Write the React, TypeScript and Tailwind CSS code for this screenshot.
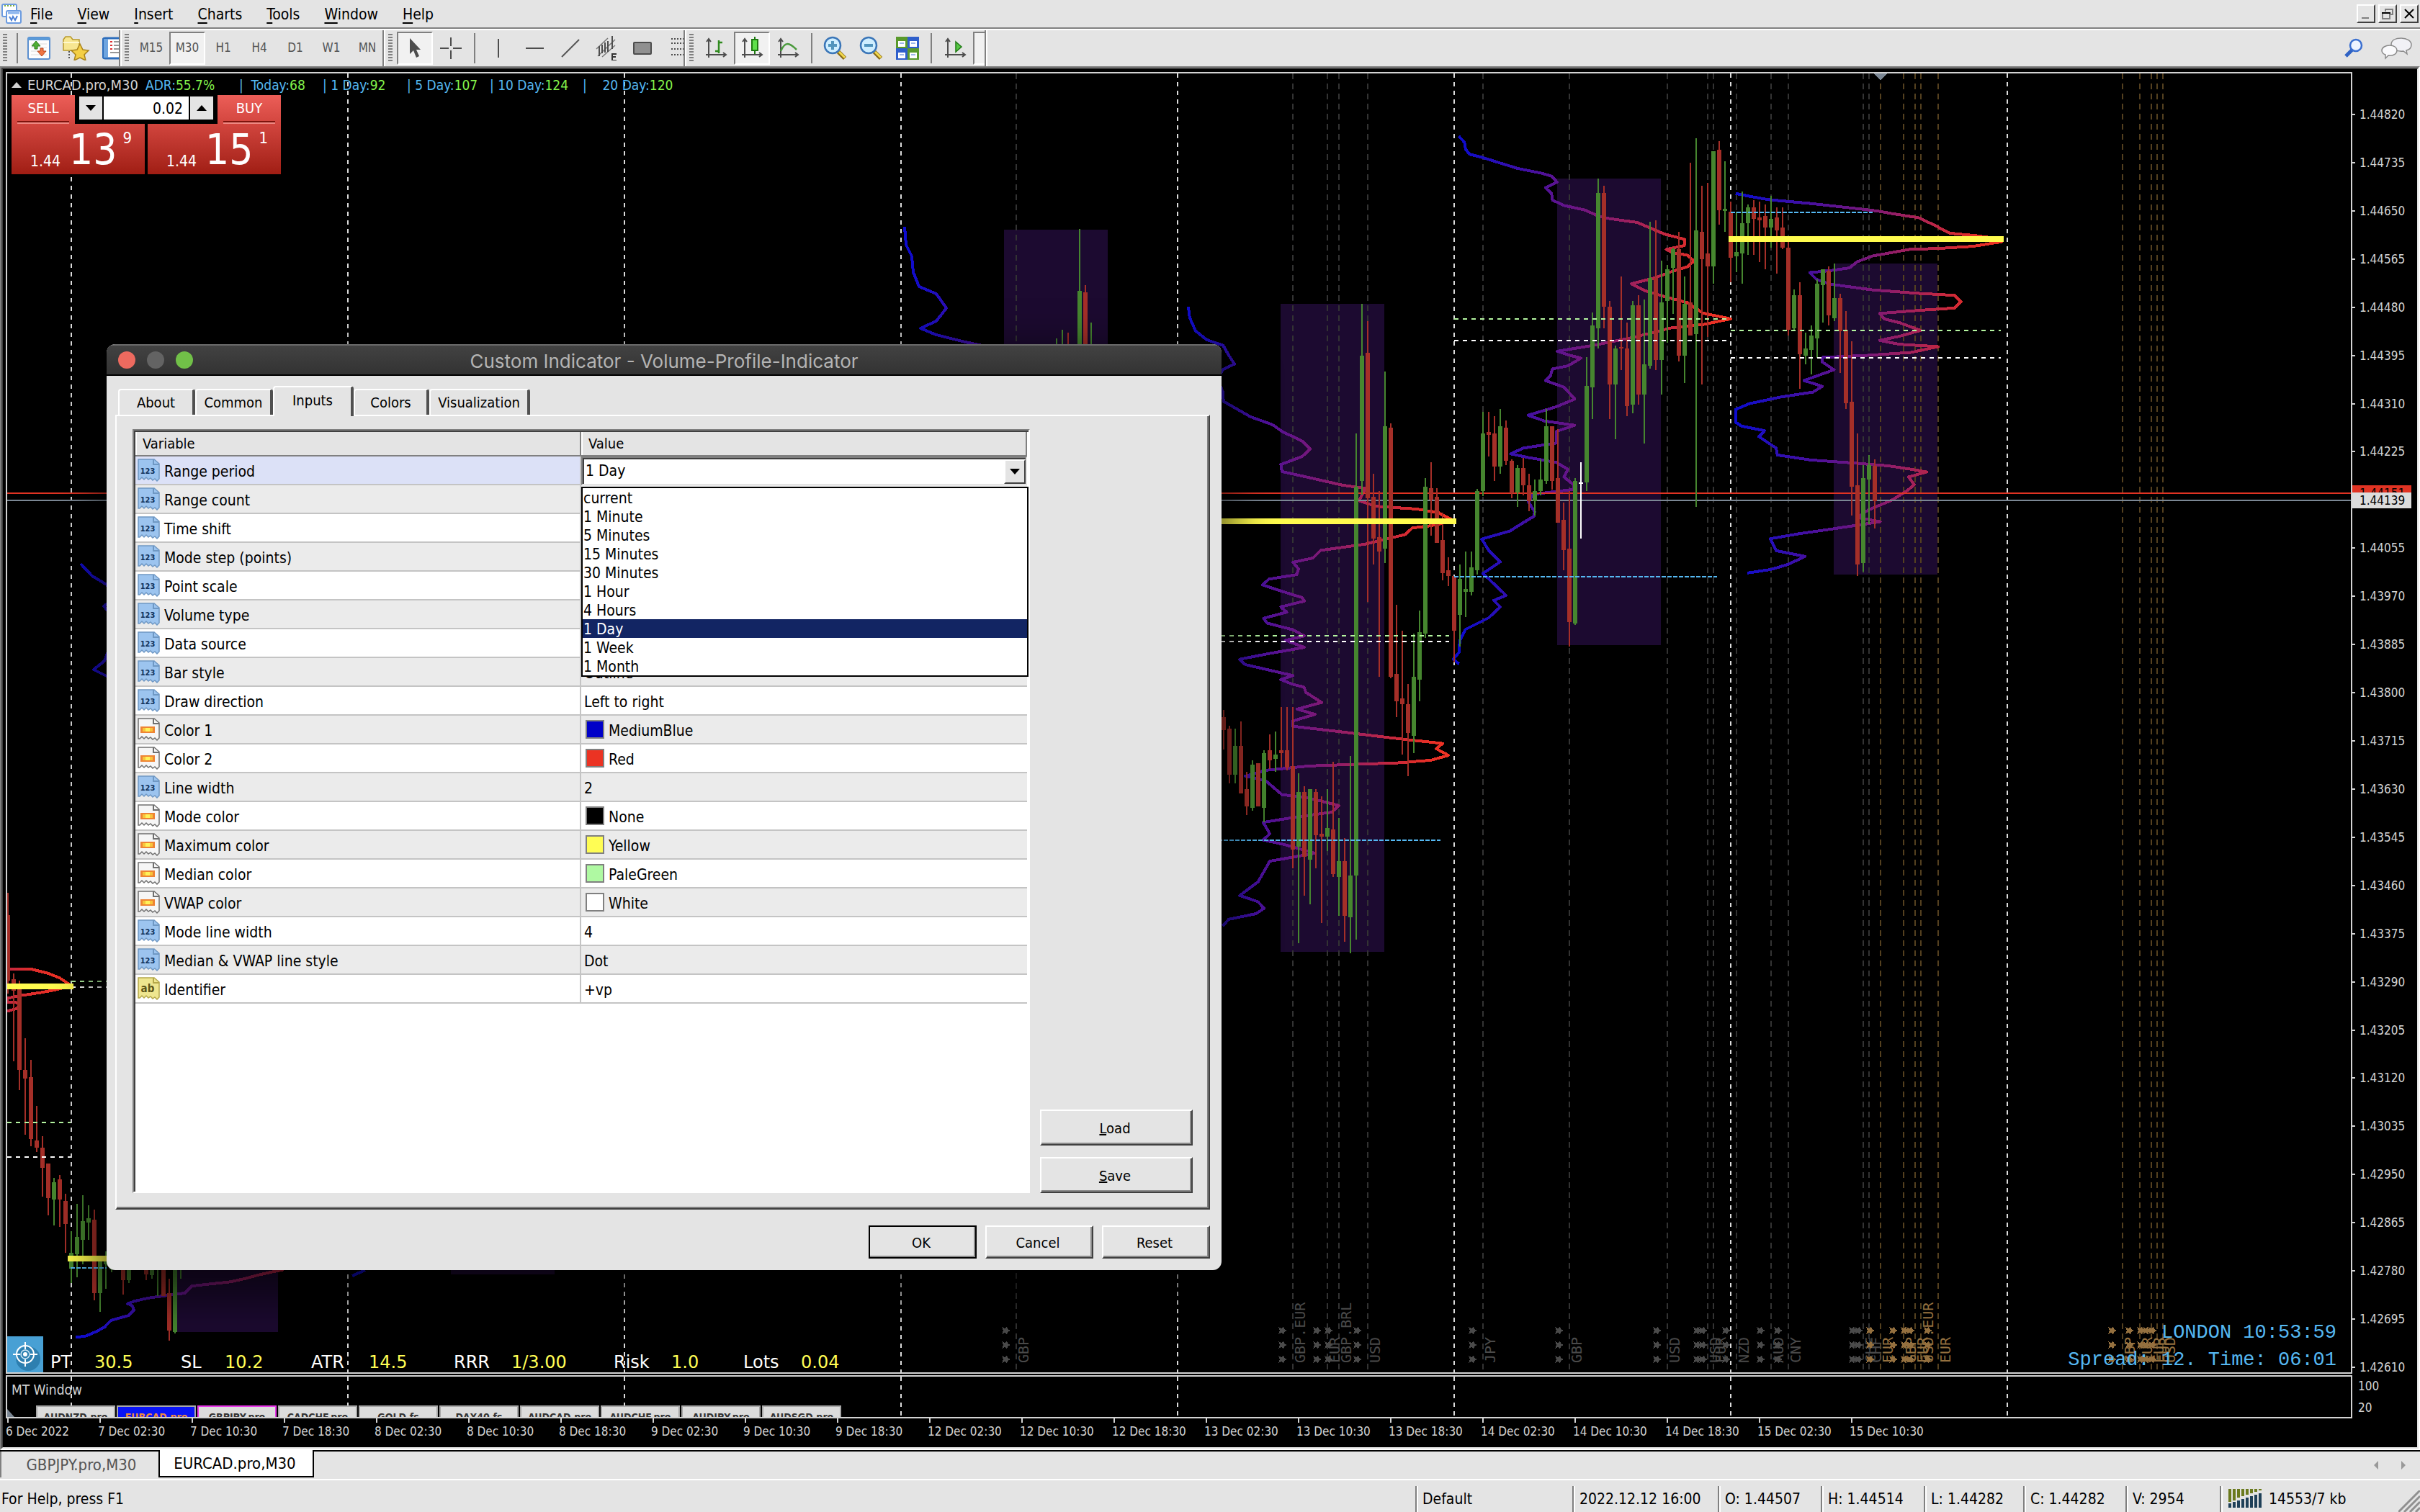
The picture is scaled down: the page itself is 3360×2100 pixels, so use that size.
import React, { useState } from "react";
import clsx from "clsx";

type Bar = [string, number, number, number, number];

type BarSeries = {
  x: number;
  y: number;
  scale: number;
  bars: Bar[];
};

const candleColors: Record<string, string> = {
  r: "#a52f28",
  g: "#46862f",
  w: "#ffffff",
};

// colour, high, open/close top, open/close bottom, low
const series: BarSeries[] = [
  {
    x: 11,
    y: 1200,
    scale: 2.24,
    bars: [
      ["r", 90, 160, 363, 403],
      ["r", 340, 358, 394, 613],
      ["r", 363, 385, 641, 703],
      ["r", 542, 641, 668, 842],
      ["r", 609, 663, 856, 878],
      ["r", 753, 860, 883, 896],
      ["r", 847, 883, 945, 1035],
      ["r", 932, 932, 1039, 1093],
      ["g", 977, 990, 1044, 1124],
      ["r", 968, 981, 1044, 1129],
      ["r", 1026, 1048, 1120, 1210],
      ["g", 1142, 1210, 1259, 1304],
      ["g", 1057, 1160, 1214, 1286],
      ["g", 1030, 1111, 1169, 1245],
      ["g", 1062, 1102, 1116, 1169],
      ["r", 1075, 1107, 1335, 1357],
      ["g", 1232, 1236, 1335, 1393],
      ["g", 1205, 1236, 1245, 1322],
      ["g", 1230, 1240, 1260, 1271],
      ["g", 1200, 1210, 1230, 1240],
      ["r", 1230, 1240, 1295, 1340],
      ["g", 1230, 1240, 1295, 1304],
      ["g", 1200, 1210, 1230, 1240],
      ["r", 1200, 1210, 1230, 1240],
      ["r", 1230, 1240, 1277, 1295],
      ["g", 1230, 1240, 1280, 1290],
      ["g", 1200, 1210, 1255, 1344],
      ["r", 1200, 1210, 1344, 1344],
      ["r", 1290, 1335, 1452, 1482],
      ["g", 1200, 1210, 1455, 1460],
      ["g", 1200, 1210, 1260, 1290],
    ],
  },
  {
    x: 1467,
    y: 0,
    scale: 1,
    bars: [
      ["g", 470, 500, 520, 540],
      ["g", 458, 500, 520, 540],
      ["r", 462, 500, 520, 540],
      ["g", 480, 500, 520, 540],
      ["g", 318, 404, 520, 540],
      ["r", 396, 406, 520, 540],
      ["g", 448, 500, 520, 540],
    ],
  },
  {
    x: 1699,
    y: 380,
    scale: 1.6333,
    bars: [
      ["r", 990, 1006, 1036, 1080],
      ["r", 1026, 1032, 1137, 1156],
      ["g", 1032, 1071, 1137, 1156],
      ["r", 1016, 1071, 1179, 1179],
      ["r", 1130, 1169, 1209, 1228],
      ["g", 1104, 1114, 1212, 1218],
      ["r", 1111, 1111, 1209, 1209],
      ["g", 1081, 1088, 1212, 1245],
      ["r", 1045, 1081, 1104, 1124],
      ["g", 1039, 1091, 1101, 1130],
      ["r", 983, 1081, 1088, 1120],
      ["r", 983, 1081, 1120, 1127],
      ["r", 983, 1117, 1307, 1349],
      ["g", 1134, 1176, 1300, 1519],
      ["r", 1163, 1176, 1323, 1411],
      ["g", 1169, 1169, 1330, 1431],
      ["r", 1169, 1176, 1274, 1349],
      ["r", 1186, 1271, 1277, 1473],
      ["g", 1169, 1258, 1277, 1310],
      ["r", 1107, 1261, 1362, 1369],
      ["g", 1235, 1333, 1369, 1457],
      ["r", 1281, 1333, 1457, 1515],
      ["g", 1094, 1365, 1460, 1542],
      ["g", 363, 483, 1365, 1511],
      ["g", 69, 186, 470, 502],
      ["r", 108, 180, 510, 745],
      ["r", 454, 506, 601, 660],
      ["r", 493, 598, 630, 915],
      ["g", 222, 346, 624, 657],
      ["r", 340, 350, 915, 918],
      ["r", 751, 908, 970, 1006],
      ["r", 810, 964, 977, 1091],
      ["r", 931, 977, 1042, 1140],
      ["g", 817, 915, 1049, 1088],
      ["g", 764, 813, 921, 970],
      ["g", 464, 483, 817, 826],
      ["r", 428, 487, 513, 595],
      ["r", 487, 506, 611, 611],
      ["r", 542, 604, 679, 696],
      ["r", 644, 673, 686, 709],
    ],
  },
  {
    x: 2019,
    y: 100,
    scale: 1.8667,
    bars: [
      ["r", 1307, 1307, 1449, 1530],
      ["g", 1277, 1314, 1407, 1490],
      ["g", 1243, 1340, 1347, 1414],
      ["g", 1243, 1284, 1348, 1358],
      ["g", 1080, 1086, 1292, 1303],
      ["g", 881, 937, 1086, 1100],
      ["r", 881, 933, 941, 997],
      ["r", 892, 937, 1023, 1060],
      ["g", 874, 918, 1023, 1042],
      ["r", 903, 922, 1008, 1019],
      ["r", 1004, 1008, 1092, 1105],
      ["g", 1019, 1027, 1090, 1127],
      ["r", 1001, 1027, 1071, 1098],
      ["r", 1042, 1071, 1112, 1139],
      ["g", 1057, 1086, 1113, 1150],
      ["g", 1004, 1057, 1086, 1098],
      ["g", 874, 918, 1060, 1067],
      ["r", 918, 918, 1060, 1083],
      ["r", 926, 1053, 1169, 1169],
      ["r", 1116, 1161, 1239, 1292],
      ["r", 1086, 1236, 1426, 1490],
      ["g", 1053, 1060, 1430, 1434],
      ["w", 1012, 1064, 1068, 1210],
      ["g", 739, 814, 1064, 1086],
      ["g", 623, 657, 818, 900],
      ["g", 276, 314, 665, 717],
      ["r", 295, 314, 609, 665],
      ["r", 594, 609, 810, 900],
      ["g", 709, 717, 810, 952],
      ["r", 530, 713, 716, 773],
      ["r", 650, 717, 866, 892],
      ["g", 594, 605, 862, 885],
      ["r", 579, 605, 836, 862],
      ["g", 590, 758, 836, 963],
      ["g", 388, 534, 762, 769],
      ["r", 385, 534, 747, 773],
      ["g", 489, 597, 747, 836],
      ["g", 500, 511, 594, 702],
      ["g", 455, 459, 508, 627],
      ["r", 414, 459, 735, 750],
      ["g", 530, 601, 735, 806],
      ["r", 235, 597, 683, 683],
      ["g", 172, 411, 679, 1127],
      ["r", 295, 414, 485, 810],
      ["r", 287, 470, 504, 687],
      ["g", 205, 205, 504, 549],
      ["r", 179, 202, 358, 396],
      ["g", 231, 355, 361, 414],
      ["r", 336, 362, 482, 545],
      ["g", 362, 467, 478, 519],
      ["g", 310, 392, 470, 549],
      ["g", 343, 351, 392, 474],
      ["r", 332, 351, 381, 474],
      ["r", 336, 377, 385, 493],
      ["r", 343, 373, 403, 511],
      ["g", 321, 381, 403, 455],
      ["r", 351, 377, 411, 523],
      ["r", 351, 403, 455, 459],
      ["r", 440, 455, 668, 683],
      ["g", 564, 579, 665, 672],
      ["r", 545, 579, 732, 821],
      ["g", 676, 717, 735, 758],
      ["g", 657, 683, 721, 784],
      ["g", 538, 549, 691, 742],
      ["g", 511, 511, 553, 650],
      ["r", 504, 515, 631, 657],
      ["g", 497, 586, 638, 646],
      ["r", 575, 586, 672, 780],
      ["r", 620, 668, 859, 874],
      ["r", 698, 855, 1075, 1150],
      ["r", 937, 1071, 1277, 1307],
      ["g", 1019, 1053, 1273, 1295],
      ["g", 993, 1019, 1057, 1172],
      ["r", 1004, 1021, 1113, 1183],
    ],
  },
];

// volume profiles: one outline per trading day
const profiles = [
  {
    day: -285,
    transform: "translate(0 1200) scale(0.3333 0.4464)",
    points:
      "30,327 130,327 200,340 250,355 295,378 240,390 170,400 80,410 30,418 30,430 60,430 85,434 70,450 30,458",
  },
  {
    day: 99,
    transform: "",
    points: "112,783 128,800 148,812 160,830 144,842 170,870 150,905 145,918 130,930 150,940",
  },
  {
    day: 99,
    transform: "translate(0 1200) scale(0.3333 0.4464)",
    points:
      "315,1473 360,1468 400,1455 435,1441 462,1420 500,1412 535,1405 558,1388 552,1375 532,1368 560,1360 620,1350 700,1342 770,1335 800,1313 860,1308 960,1300 1020,1290 1080,1278 1140,1268 1180,1262",
  },
  {
    day: 483,
    transform: "",
    points: "489,1772 507,1764",
  },
  {
    day: 1251,
    transform: "",
    points:
      "1256,315 1258,340 1266,356 1268,378 1276,398 1300,408 1314,428 1300,446 1278,456 1300,465 1340,475 1384,484",
  },
  {
    day: 1635,
    transform: "translate(1660 380) scale(0.5102 0.6122)",
    points:
      "-20,75 -16,100 0,130 30,150 75,163 90,185 106,205 74,218 60,240 74,268 76,290 150,325 210,343 235,358 290,380 312,398 290,415 232,433 235,449 310,463 400,480 462,487 445,515 490,528 600,534 660,542 704,561 640,572 590,577 570,592 460,614 340,628 320,645 265,655 280,670 275,683 200,693 182,706 232,720 290,735 296,743 232,756 248,768 185,782 195,793 265,808 296,822 245,832 296,848 200,862 120,875 135,887 265,912 232,921 265,932 295,938 300,950 343,973 276,988 325,1000 265,1015 265,1027 400,1040 540,1054 672,1066 655,1078 688,1093 640,1104 550,1110 310,1117 190,1127 135,1140 190,1150 235,1182 310,1190 390,1207 370,1222 280,1232 184,1245 202,1271 184,1285 240,1295 325,1315 202,1333 170,1380 120,1411 170,1425 186,1440 165,1452 90,1465 74,1480",
  },
  {
    day: 2019,
    transform: "translate(2000 100) scale(0.5357)",
    points:
      "47,166 62,182 65,200 75,213 110,222 145,233 200,250 260,262 288,270 302,285 272,300 288,315 290,332 320,346 375,358 410,374 430,379 480,386 510,390 545,405 580,420 633,434 632,450 585,460 600,468 640,475 657,490 640,505 600,517 555,534 495,549 530,567 590,585 640,598 680,625 752,640 680,655 600,663 500,688 400,708 303,724 330,733 364,742 330,762 290,770 285,788 272,800 320,817 348,848 300,868 227,890 270,905 348,916 300,932 300,962 215,975 182,990 230,1000 300,1012 330,1030 320,1050 345,1070 345,1082 240,1095 228,1115 244,1140 242,1152 212,1170 180,1190 107,1211 125,1240 155,1270 110,1300 170,1357 138,1370 155,1387 125,1415 65,1445 50,1475 48,1505 33,1522 48,1535",
  },
  {
    day: 2403,
    transform: "translate(2000 100) scale(0.5357)",
    points:
      "765,315 800,322 850,331 960,341 1060,352 1130,360 1170,367 1240,378 1280,397 1320,418 1385,424 1452,433 1455,440 1380,452 1300,457 1215,460 1120,477 1080,492 1060,508 1010,515 957,520 975,538 1010,550 1120,565 1240,574 1332,579 1349,596 1332,612 1240,618 1138,626 1150,640 1190,650 1244,670 1190,685 1138,696 1190,706 1290,712 1220,727 1100,735 990,740 990,752 1020,772 942,800 990,815 965,830 880,843 800,860 765,875 765,908 780,918 840,930 825,945 870,975 873,993 960,1006 1060,1013 1160,1021 1220,1030 1260,1037 1213,1050 1228,1070 1210,1085 1170,1110 1110,1135 1080,1155 1140,1166 1060,1178 1000,1187 930,1197 855,1210 870,1241 945,1256 900,1277 855,1290 795,1299",
  },
];

const profileDays = [-285, 99, 483, 1251, 1635, 2019, 2403];

const sessions = [
  [243, 1500, 143, 350],
  [626, 1500, 144, 270],
  [1394, 319, 144, 400],
  [1778, 422, 144, 900],
  [2162, 248, 144, 648],
  [2546, 366, 144, 432],
];

const separators = [99, 483, 867, 1251, 1635, 2019, 2403, 2787];

// x, currency, upcoming
const events: [number, string, boolean][] = [
  [1411, "GBP", false],
  [1795, "GBP.EUR", false],
  [1843, "EUR", false],
  [1859, "GBP.BRL", false],
  [1899, "USD", false],
  [2059, "JPY", false],
  [2179, "GBP", false],
  [2315, "USD", false],
  [2371, "USD", false],
  [2379, "EUR", false],
  [2411, "NZD", false],
  [2459, "AUD", false],
  [2483, "CNY", false],
  [2587, "CHF", false],
  [2595, "CHF", false],
  [2611, "EUR", true],
  [2643, "GBP", true],
  [2659, "EUR", true],
  [2667, "USD.EUR", true],
  [2691, "EUR", true],
  [2947, "GBP", true],
  [2971, "EUR", true],
  [2987, "EUR", true],
  [2995, "EUR", true],
  [3003, "USD", true],
];

const priceLabels = Array.from({ length: 27 }, (_, i) => (1.4482 - i * 0.00085).toFixed(5));

const timeLabels = [
  "6 Dec 2022", "7 Dec 02:30", "7 Dec 10:30", "7 Dec 18:30", "8 Dec 02:30", "8 Dec 10:30", "8 Dec 18:30",
  "9 Dec 02:30", "9 Dec 10:30", "9 Dec 18:30", "12 Dec 02:30", "12 Dec 10:30", "12 Dec 18:30", "13 Dec 02:30",
  "13 Dec 10:30", "13 Dec 18:30", "14 Dec 02:30", "14 Dec 10:30", "14 Dec 18:30", "15 Dec 02:30", "15 Dec 10:30",
];

const menus = ["File", "View", "Insert", "Charts", "Tools", "Window", "Help"];
const timeframes = ["M15", "M30", "H1", "H4", "D1", "W1", "MN"];
const dialogTabs = [
  { name: "About", width: "w-[107px]" },
  { name: "Common", width: "w-[108px]" },
  { name: "Inputs", width: "w-[112px]" },
  { name: "Colors", width: "w-[105px]" },
  { name: "Visualization", width: "w-[140px]" },
];
const periods = [
  "current", "1 Minute", "5 Minutes", "15 Minutes", "30 Minutes", "1 Hour", "4 Hours", "1 Day", "1 Week", "1 Month",
];

type Param = { name: string; kind: "num" | "color" | "text"; value?: string; swatch?: string };

const params: Param[] = [
  { name: "Range period", kind: "num" },
  { name: "Range count", kind: "num" },
  { name: "Time shift", kind: "num" },
  { name: "Mode step (points)", kind: "num" },
  { name: "Point scale", kind: "num" },
  { name: "Volume type", kind: "num" },
  { name: "Data source", kind: "num" },
  { name: "Bar style", kind: "num", value: "Outline" },
  { name: "Draw direction", kind: "num", value: "Left to right" },
  { name: "Color 1", kind: "color", value: "MediumBlue", swatch: "bg-[#0000c8]" },
  { name: "Color 2", kind: "color", value: "Red", swatch: "bg-[#eb3323]" },
  { name: "Line width", kind: "num", value: "2" },
  { name: "Mode color", kind: "color", value: "None", swatch: "bg-black" },
  { name: "Maximum color", kind: "color", value: "Yellow", swatch: "bg-[#fffd54]" },
  { name: "Median color", kind: "color", value: "PaleGreen", swatch: "bg-[#aff9a2]" },
  { name: "VWAP color", kind: "color", value: "White", swatch: "bg-white" },
  { name: "Mode line width", kind: "num", value: "4" },
  { name: "Median & VWAP line style", kind: "num", value: "Dot" },
  { name: "Identifier", kind: "text", value: "+vp" },
];

const symbols = [
  "AUDNZD.pro", "EURCAD.pro", "GBPJPY.pro", "CADCHF.pro", "GOLD.fs", "DAX40.fs", "AUDCAD.pro", "AUDCHF.pro",
  "AUDJPY.pro", "AUDSGD.pro",
];

const riskStats = [
  { label: "PT", value: "30.5", pair: "w-[181px]", cell: "w-[61px]" },
  { label: "SL", value: "10.2", pair: "w-[181px]", cell: "w-[61px]" },
  { label: "ATR", value: "14.5", pair: "w-[198px]", cell: "w-[80px]" },
  { label: "RRR", value: "1/3.00", pair: "w-[222px]", cell: "w-[80px]" },
  { label: "Risk", value: "1.0", pair: "w-[180px]", cell: "w-[80px]" },
  { label: "Lots", value: "0.04", pair: "w-[180px]", cell: "w-[80px]" },
];

const rangeStats = [
  { label: "ADR:", value: "55.7%", width: "w-[130px]" },
  { label: "|  Today:", value: "68", width: "w-[116px]" },
  { label: "| 1 Day:", value: "92", width: "w-[117px]" },
  { label: "| 5 Day:", value: "107", width: "w-[115px]" },
  { label: "| 10 Day:", value: "124", width: "w-[129px]" },
  { label: "|    20 Day:", value: "120", width: "w-[140px]" },
];

const statusCells = [
  { text: "Default", width: "w-[218px]" },
  { text: "2022.12.12 16:00", width: "w-[202px]" },
  { text: "O: 1.44507", width: "w-[143px]" },
  { text: "H: 1.44514", width: "w-[143px]" },
  { text: "L: 1.44282", width: "w-[138px]" },
  { text: "C: 1.44282", width: "w-[142px]" },
  { text: "V: 2954", width: "w-[131px]" },
];

/* ---------- icons ---------- */

const Axes = () => (
  <>
    <path d="M6 29V3M3 7l3-4 3 4M2 25h28M26 22l4 3-4 3" fill="none" stroke="#4d4d4d" strokeWidth="2" />
  </>
);

const AppIcon = () => (
  <svg viewBox="0 0 28 28" className="h-7 w-7">
    <rect x="1" y="1" width="20" height="17" rx="2" fill="#fff" stroke="#6b9be0" strokeWidth="2" />
    <path d="M4 3h14" stroke="#7fae3c" strokeWidth="2" strokeDasharray="2 2" />
    <rect x="7" y="10" width="20" height="17" rx="2" fill="#fff" stroke="#6b9be0" strokeWidth="2" />
    <path d="M9 13h16" stroke="#8ab4ee" strokeWidth="3" />
    <path d="M11 18l3 5 2-5 3 5 3-6" fill="none" stroke="#4a7fd6" strokeWidth="2" />
  </svg>
);

const NewChartIcon = () => (
  <svg viewBox="0 0 32 32" className="h-8 w-8">
    <rect x="1" y="1" width="30" height="30" rx="2" fill="#fdfdfd" stroke="#5b8fcf" strokeWidth="2" />
    <path d="M1 3h30" stroke="#5b9ad8" strokeWidth="4" />
    <path d="M5 10h22M5 15h22M5 20h22M5 25h22" stroke="#dcdcdc" strokeWidth="1" />
    <path d="M12 6l6 7h-4v4h-4v-4H6z" fill="#4fae35" stroke="#2c7d1c" />
    <path d="M20 27l-6-7h4v-4h4v4h4z" fill="#ee7443" stroke="#b8431b" />
  </svg>
);

const FavoritesIcon = () => (
  <svg viewBox="0 0 40 34" className="h-[34px] w-10">
    <path d="M2 5l3-4h7l3 4h9v15H2z" fill="#f7e691" stroke="#b8992b" strokeWidth="1.5" />
    <path d="M2 9h22" stroke="#fff8cc" strokeWidth="2" />
    <path d="M10 21v12" stroke="#555" strokeWidth="2" strokeDasharray="2 2" />
    <path d="M25 11l4 8 8 1-6 6 2 8-8-4-8 4 2-8-6-6 8-1z" fill="#f4cf45" stroke="#a8821c" strokeWidth="1.5" />
  </svg>
);

const ListIcon = () => (
  <svg viewBox="0 0 24 32" className="h-8 w-6">
    <path d="M30 2H4q-3 0-3 3v22q0 3 3 3h26z" fill="#fff" stroke="#2d6dbb" strokeWidth="3" />
    <path d="M2 3h6v26H2z" fill="#6fa5df" />
    <path d="M11 7h3M11 12h3M11 17h3" stroke="#d33" strokeWidth="2" />
    <path d="M16 7h8M16 12h8M16 17h8M11 22h13" stroke="#777" strokeWidth="1.5" />
  </svg>
);

const CursorIcon = () => (
  <svg viewBox="0 0 20 32" className="h-8 w-5">
    <path d="M3 2v22l5-5 4 10 4-2-4-9h6z" fill="#4d4d4d" />
  </svg>
);

const CrosshairIcon = () => (
  <svg viewBox="0 0 32 32" className="h-8 w-8">
    <path d="M16 1v12M16 19v12M1 16h12M19 16h12" stroke="#4d4d4d" strokeWidth="2" />
  </svg>
);

const VLineIcon = () => (
  <svg viewBox="0 0 32 32" className="h-8 w-8">
    <path d="M16 3v26" stroke="#4d4d4d" strokeWidth="2" />
  </svg>
);

const HLineIcon = () => (
  <svg viewBox="0 0 32 32" className="h-8 w-8">
    <path d="M4 16h25" stroke="#4d4d4d" strokeWidth="2" />
  </svg>
);

const TrendIcon = () => (
  <svg viewBox="0 0 32 32" className="h-8 w-8">
    <path d="M4 28L28 4" stroke="#555" strokeWidth="2" />
  </svg>
);

const ChannelIcon = () => (
  <svg viewBox="0 0 32 34" className="h-[34px] w-8">
    <path d="M2 18L18 3M4 28L28 5M10 29L28 13" stroke="#777" strokeWidth="1.5" />
    <path d="M6 14v14M10 12v12M14 9v14M18 7v15M24 0v18" stroke="#4d4d4d" strokeWidth="2" />
    <path d="M30 25h-6v9h6M24 29h5" fill="none" stroke="#333" strokeWidth="2" />
  </svg>
);

const RectIcon = () => (
  <svg viewBox="0 0 32 32" className="h-8 w-8">
    <rect x="4" y="8" width="24" height="16" rx="1" fill="#909090" stroke="#4d4d4d" strokeWidth="2" />
  </svg>
);

const FiboIcon = () => (
  <svg viewBox="0 0 24 32" className="h-8 w-6">
    <path d="M2 3h22M2 9h22M2 17h22M2 25h22" stroke="#4d4d4d" strokeWidth="2" strokeDasharray="2 2" />
  </svg>
);

const BarChartIcon = () => (
  <svg viewBox="0 0 32 32" className="h-8 w-8">
    <Axes />
    <path d="M20 5v18M20 8h5M15 20h5" stroke="#2f8a1e" strokeWidth="2.5" />
  </svg>
);

const CandleChartIcon = () => (
  <svg viewBox="0 0 32 32" className="h-8 w-8">
    <Axes />
    <path d="M20 0v24" stroke="#1e7a12" strokeWidth="2" />
    <rect x="16" y="4" width="8" height="15" fill="#5fe04c" stroke="#1e7a12" strokeWidth="2" />
  </svg>
);

const LineChartIcon = () => (
  <svg viewBox="0 0 32 32" className="h-8 w-8">
    <Axes />
    <path d="M6 20c6-14 12-12 22-2" fill="none" stroke="#4a9a3c" strokeWidth="2.5" />
  </svg>
);

const ShiftIcon = () => (
  <svg viewBox="0 0 32 32" className="h-8 w-8">
    <Axes />
    <path d="M17 7l8 7-8 7z" fill="#58c746" stroke="#1e7a12" strokeWidth="1.5" />
  </svg>
);

const ZoomIcon = ({ plus }: { plus?: boolean }) => (
  <svg viewBox="0 0 34 34" className="h-[34px] w-[34px]">
    <path d="M21 22l9 9" stroke="#8a6a14" strokeWidth="6" />
    <path d="M22 22l8 8" stroke="#f2d94e" strokeWidth="3" />
    <circle cx="13" cy="13" r="11" fill="#cfeeff" stroke="#3b76b8" strokeWidth="2.5" />
    <path d={plus ? "M7 13h12M13 7v12" : "M7 13h12"} stroke="#5294bd" strokeWidth="4" />
  </svg>
);

const TilesIcon = () => (
  <svg viewBox="0 0 32 32" className="h-8 w-8">
    <path d="M0 0h16v16H0zM16 16h16v16H16z" fill="#5a9a2c" />
    <path d="M16 0h16v16H16zM0 16h16v16H0z" fill="#2f5fcb" />
    <path d="M3 6h10v8H3zM19 6h10v8H19zM3 22h10v8H3zM19 22h10v8H19z" fill="#fff" />
    <path d="M5 9h6M21 9h6M5 25h6M21 25h6" stroke="#9db8ea" strokeWidth="2" />
  </svg>
);

const SearchIcon = () => (
  <svg viewBox="0 0 28 28" className="h-7 w-7">
    <path d="M3 25l9-9" stroke="#2f62c4" strokeWidth="5" />
    <circle cx="17" cy="10" r="8" fill="#eef4ff" stroke="#3a6fd0" strokeWidth="2.5" />
  </svg>
);

const ChatIcon = () => (
  <svg viewBox="0 0 44 32" className="h-8 w-11">
    <path
      d="M28 2c8 0 14 4 14 9 0 4-3 7-7 8l1 5-5-4c-9 1-17-3-17-9s6-9 14-9z"
      fill="#f1f1f6"
      stroke="#8b8b8b"
      strokeWidth="1.5"
    />
    <path
      d="M12 12c6 0 10 3 10 7s-4 8-12 7l-4 4v-5c-3-1-5-3-5-6 0-4 5-7 11-7z"
      fill="#fafafc"
      stroke="#8b8b8b"
      strokeWidth="1.5"
    />
  </svg>
);

const TargetIcon = () => (
  <svg viewBox="0 0 50 50" className="h-[50px] w-[50px]">
    <circle cx="29" cy="31" r="17" fill="#2d7fb0" />
    <circle cx="25" cy="25" r="12" fill="none" stroke="#fff" strokeWidth="2" />
    <circle cx="25" cy="25" r="6" fill="none" stroke="#cfe8f6" strokeWidth="1.5" />
    <circle cx="25" cy="25" r="3" fill="#fff" />
    <path d="M25 8v10M25 32v10M8 25h10M32 25h10" stroke="#fff" strokeWidth="2" />
  </svg>
);

const ParamIcon = ({ kind }: { kind: Param["kind"] }) => {
  const sheet = "M2 1h22l7 6v21l-3 3-3-3-3 2-3-3-3 2-3-3-3 3-3-3-3 3H2z";
  const stroke = kind === "num" ? "#6f98c4" : kind === "color" ? "#707070" : "#b5a84a";
  const fill = kind === "num" ? "#9cc4ef" : kind === "color" ? "#f6f6f6" : "#efe68f";
  return (
    <svg viewBox="0 0 32 32" className="h-8 w-8 shrink-0">
      <path d={sheet} fill={fill} stroke={stroke} strokeWidth="1.5" />
      <path d="M23 1v7h8" fill="none" stroke={stroke} strokeWidth="2" />
      {kind === "color" && (
        <>
          <rect x="5" y="12" width="20" height="9" fill="#ee8434" />
          <rect x="8" y="14" width="14" height="5" fill="#f8c53c" />
          <rect x="12" y="14" width="6" height="5" fill="#fff25a" />
        </>
      )}
      {kind !== "color" && (
        <text
          x="15"
          y="21"
          textAnchor="middle"
          fontSize={kind === "num" ? 11 : 15}
          fontWeight="bold"
          fontFamily="DejaVu Sans Condensed, DejaVu Sans, sans-serif"
          fill={kind === "num" ? "#12325c" : "#5d5416"}
        >
          {kind === "num" ? "123" : "ab"}
        </text>
      )}
    </svg>
  );
};

/* ---------- toolbar ---------- */

const Grip = () => (
  <span className="mr-1.5 ml-1 h-10 w-1.5 shrink-0 bg-[repeating-linear-gradient(to_bottom,#808080_0_2px,transparent_2px_4px)]" />
);

const Divider = () => <span className="mx-[7px] h-[42px] w-0.5 shrink-0 bg-[#808080]" />;

type ToolProps = { label: string; active?: boolean; children: React.ReactNode };

const Tool = ({ label, active, children }: ToolProps) => (
  <button
    aria-label={label}
    className={clsx(
      "flex h-[46px] w-[50px] shrink-0 items-center justify-center border-2 text-[17px] text-[#555]",
      active
        ? "border-t-[#808080] border-l-[#808080] border-r-white border-b-white bg-[#f1f1f1]"
        : "border-transparent"
    )}
  >
    {children}
  </button>
);

const ToolGroup = ({ children, className }: { children: React.ReactNode; className?: string }) => (
  <div
    className={clsx(
      "flex h-full items-center overflow-hidden border-r-2 border-[#808080] shadow-[2px_0_#fff] mr-0.5",
      className
    )}
  >
    {children}
  </div>
);

const Toolbar = () => (
  <div className="flex h-[52px] items-center border-t-2 border-white">
    <ToolGroup className="w-[167px]">
      <Grip />
      <Divider />
      <div className="flex items-center gap-4 pl-1.5">
        <button aria-label="New chart"><NewChartIcon /></button>
        <button aria-label="Favorites"><FavoritesIcon /></button>
        <button aria-label="Templates"><ListIcon /></button>
      </div>
    </ToolGroup>
    <ToolGroup className="w-[364px]">
      <Grip />
      {timeframes.map((tf) => (
        <Tool key={tf} label={tf} active={tf === "M30"}>{tf}</Tool>
      ))}
    </ToolGroup>
    <ToolGroup className="w-[416px]">
      <Grip />
      <Tool label="Cursor" active><CursorIcon /></Tool>
      <Tool label="Crosshair"><CrosshairIcon /></Tool>
      <Divider />
      <Tool label="Vertical line"><VLineIcon /></Tool>
      <Tool label="Horizontal line"><HLineIcon /></Tool>
      <Tool label="Trendline"><TrendIcon /></Tool>
      <Tool label="Channel"><ChannelIcon /></Tool>
      <Tool label="Rectangle"><RectIcon /></Tool>
      <Tool label="Fibonacci"><FiboIcon /></Tool>
    </ToolGroup>
    <ToolGroup className="w-[416px]">
      <Grip />
      <Tool label="Bar chart"><BarChartIcon /></Tool>
      <Tool label="Candlesticks" active><CandleChartIcon /></Tool>
      <Tool label="Line chart"><LineChartIcon /></Tool>
      <Divider />
      <Tool label="Zoom in"><ZoomIcon plus /></Tool>
      <Tool label="Zoom out"><ZoomIcon /></Tool>
      <Tool label="Tile windows"><TilesIcon /></Tool>
      <Divider />
      <Tool label="Chart shift"><ShiftIcon /></Tool>
      <Tool label="Auto scroll" active><span className="w-8" /></Tool>
    </ToolGroup>
    <div className="ml-auto flex items-center gap-6 pr-2.5">
      <button aria-label="Search"><SearchIcon /></button>
      <button aria-label="Chat"><ChatIcon /></button>
    </div>
  </div>
);

const WindowButton = ({ label, children }: { label: string; children: React.ReactNode }) => (
  <button
    aria-label={label}
    className="flex h-[26px] w-[26px] items-center justify-center border-2 border-t-white border-l-white border-r-[#404040] border-b-[#404040] bg-[#e4e4e4]"
  >
    <svg viewBox="0 0 18 18" className="h-[18px] w-[18px]" fill="none" stroke="#000" strokeWidth="2">
      {children}
    </svg>
  </button>
);

const MenuBar = () => (
  <header className="flex h-10 items-center border-b-2 border-[#808080] pl-0.5 text-[21px]">
    <AppIcon />
    <nav className="ml-3 flex gap-[34px] pt-1">
      {menus.map((menu) => (
        <button key={menu}>
          <span className="underline underline-offset-4 decoration-2">{menu[0]}</span>
          {menu.slice(1)}
        </button>
      ))}
    </nav>
    <div className="ml-auto flex gap-1 pr-0.5">
      <WindowButton label="Minimize"><path d="M3 15h10" stroke="#808080" /></WindowButton>
      <WindowButton label="Restore">
        <path d="M6 6V3h10v7h-3" stroke="#808080" />
        <path d="M2 8h10v8H2z" stroke="#808080" />
        <path d="M1 8h12" />
      </WindowButton>
      <WindowButton label="Close"><path d="M3 3l12 12M15 3L3 15" /></WindowButton>
    </div>
  </header>
);

/* ---------- chart ---------- */

const Candles = ({ data }: { data: BarSeries }) => {
  const toY = (v: number) => Math.round(data.y + v / data.scale);
  return (
    <g>
      {data.bars.map(([type, high, top, bottom, low], i) => {
        const x = data.x + i * 8;
        return (
          <g key={i} fill={candleColors[type]}>
            <rect x={x - 1} y={toY(high)} width="2" height={toY(low) - toY(high)} />
            <rect x={x - 3} y={toY(top)} width="6" height={Math.max(2, toY(bottom) - toY(top))} />
          </g>
        );
      })}
    </g>
  );
};

const PlotLayer = () => (
  <svg viewBox="10 102 3254 1804" preserveAspectRatio="none" className="absolute inset-0 h-full w-full" shapeRendering="crispEdges">
    <defs>
      {profileDays.map((day) => (
        <linearGradient key={day} id={`profile${day}`} gradientUnits="userSpaceOnUse" x1={day} x2={day + 384} y1="0" y2="0">
          <stop offset="0" stopColor="#0a0ad2" />
          <stop offset="0.1" stopColor="#1c0ec0" />
          <stop offset="0.3" stopColor="#4a109c" />
          <stop offset="0.5" stopColor="#7a1878" />
          <stop offset="0.7" stopColor="#b02450" />
          <stop offset="0.85" stopColor="#dc2c2c" />
          <stop offset="1" stopColor="#f43422" />
        </linearGradient>
      ))}
    </defs>

    {sessions.map(([x, y, w, h]) => (
      <rect key={x} x={x} y={y} width={w} height={h} fill="#1c0a30" />
    ))}

    {separators.map((x) => (
      <line key={x} x1={x} x2={x} y1="102" y2="1906" stroke="#dcdcdc" strokeWidth="2" strokeDasharray="6 6" />
    ))}

    {events.map(([x, , upcoming]) => (
      <line
        key={x}
        x1={x}
        x2={x}
        y1="102"
        y2="1902"
        stroke={upcoming ? "#54401f" : "#333333"}
        strokeWidth="2"
        strokeDasharray="8 6"
      />
    ))}

    {profiles.map((p, i) => (
      <Profile key={i} day={p.day} transform={p.transform} points={p.points} />
    ))}

    <path d="M10 685H3264" stroke="#e03323" strokeWidth="2" />
    <path d="M10 695H3264" stroke="#7b8794" strokeWidth="2" />

    {series.map((s) => (
      <Candles key={s.x} data={s} />
    ))}

    <g stroke="#b4f5a0" strokeWidth="2" strokeDasharray="6 6">
      <path d="M10 1559H98M99 1363H148M1635 883H2012M2019 443H2400M2403 459H2778" />
    </g>
    <g stroke="#ffffff" strokeWidth="2" strokeDasharray="6 6">
      <path d="M10 1607H98M99 1371H148M1635 891H2012M2019 473H2400M2403 497H2778" />
    </g>
    <g stroke="#55b8f2" strokeWidth="2" strokeDasharray="6 2">
      <path d="M98 1761H148M1635 1167H2000M2019 801H2384M2403 295H2600" />
    </g>
    <g stroke="#fffb4e" strokeWidth="8">
      <path d="M10 1370H102M94 1748H150M1635 724H2022M2400 332H2782" />
    </g>

    <g fontFamily="DejaVu Sans Mono, monospace" fontSize="20">
      {events.map(([x, code, upcoming]) => (
        <g key={x} fill={upcoming ? "#94703f" : "#4a4a4a"}>
          <text transform={`translate(${x + 17} 1893) rotate(-90)`}>{code}</text>
          {[1848, 1868, 1888].map((y) => (
            <path key={y} transform={`translate(${x - 14} ${y})`} d="M6 0L2 2 1 6-2 3-6 5-4 0-6-5-2-3 1-6 2-2z" />
          ))}
        </g>
      ))}
    </g>

    <path d="M2602 102h18l-9 10z" fill="#7b8794" />
  </svg>
);

const Profile = ({ day, transform, points }: { day: number; transform: string; points: string }) => {
  // bring every outline into plot coordinates so that the day gradient lines up
  const nums = (transform.match(/-?[\d.]+/g) || ["0", "0", "1"]).map(Number);
  const [tx, ty, sx, sy = sx] = nums;
  const plotted = points
    .split(" ")
    .map((pair) => {
      const [x, y] = pair.split(",").map(Number);
      return `${tx + x * sx},${ty + y * sy}`;
    })
    .join(" ");
  return <polyline points={plotted} fill="none" stroke={`url(#profile${day})`} strokeWidth="4" strokeLinejoin="round" />;
};

const TradePanel = () => {
  const [lots, setLots] = useState("0.02");
  const quotes = [
    { side: "Sell", big: "13", pip: "9" },
    { side: "Buy", big: "15", pip: "1" },
  ];
  return (
    <div className="w-[374px]">
      <div className="flex justify-between">
        <SideButton>SELL</SideButton>
        <div className="mt-0.5 flex h-8 w-[186px] gap-0.5">
          <button aria-label="Decrease" className="flex w-8 items-center justify-center bg-[#e4e4e4]">
            <svg viewBox="0 0 14 8" className="h-2 w-3.5"><path d="M0 0h14L7 8z" /></svg>
          </button>
          <input
            aria-label="Lots"
            value={lots}
            onChange={(e) => setLots(e.target.value)}
            className="w-0 flex-1 bg-white px-2 pt-1 text-right text-[21px] text-black outline-none"
          />
          <button aria-label="Increase" className="flex w-8 items-center justify-center bg-[#e4e4e4]">
            <svg viewBox="0 0 14 8" className="h-2 w-3.5"><path d="M0 8h14L7 0z" /></svg>
          </button>
        </div>
        <SideButton>BUY</SideButton>
      </div>
      <div className="flex gap-1">
        {quotes.map((q) => (
          <button
            key={q.side}
            aria-label={q.side}
            className="flex h-[70px] flex-1 items-end justify-center gap-3 bg-linear-to-b from-[#d2453e] to-[#a01d13] pb-2 pl-2 text-white"
          >
            <span className="text-[21px] leading-5">1.44</span>
            <span className="text-[58px] leading-[52px]">{q.big}</span>
            <span className="-ml-1 self-start pt-2 text-[22px] leading-6">{q.pip}</span>
          </button>
        ))}
      </div>
    </div>
  );
};

const SideButton = ({ children }: { children: React.ReactNode }) => (
  <button className="flex h-10 w-[88px] flex-col items-center justify-end gap-1.5 bg-linear-to-b from-[#ec5e58] to-[#d2453e] px-2 text-[20px] leading-6 text-white">
    {children}
    <span className="h-1 w-full shrink-0 border-t-2 border-[#7d130c] bg-[#f08a84]" />
  </button>
);

const Chart = () => (
  <section className="flex flex-1 flex-col border-2 border-t-[#808080] border-l-[#808080] border-r-white border-b-white">
    <div className="flex flex-1 flex-col gap-0.5 border-2 border-t-[#404040] border-l-[#404040] border-r-[#e4e4e4] border-b-[#e4e4e4] bg-black pt-1 pl-1 text-[#d3d3d3]">
      <div className="flex flex-1">
        <div className="relative flex-1 overflow-hidden border-2 border-[#d3d3d3]">
          <PlotLayer />
          <div className="absolute top-1 left-1.5 flex flex-col gap-0.5">
            <div className="flex h-6 items-center whitespace-pre text-[19px]">
              <svg viewBox="0 0 14 8" className="mr-2 h-2 w-3.5"><path d="M7 0l7 8H0z" fill="#d3d3d3" /></svg>
              <span className="w-[164px] text-[20px]">EURCAD.pro,M30</span>
              {rangeStats.map((s) => (
                <span key={s.label} className={clsx("text-[#55b8f2]", s.width)}>
                  {s.label}
                  <span className="text-[#83f34c]">{s.value}</span>
                </span>
              ))}
            </div>
            <TradePanel />
          </div>
          <div className="absolute bottom-0 left-0 flex h-[50px] font-['DejaVu_Sans',sans-serif] text-[24px]">
            <button aria-label="Risk tool" className="bg-[#48a0d4]"><TargetIcon /></button>
            <div className="flex items-end pl-2.5">
              {riskStats.map((s) => (
                <span key={s.label} className={clsx("flex leading-7", s.pair)}>
                  <span className={clsx("text-white", s.cell)}>{s.label}</span>
                  <span className="text-[#fffd54]">{s.value}</span>
                </span>
              ))}
            </div>
          </div>
          <div className="absolute right-5 -bottom-0.5 text-right font-['Liberation_Mono',monospace] text-[27px] leading-[38px] text-[#55b8f2]">
            <p>LONDON 10:53:59</p>
            <p>Spread: 12. Time: 06:01</p>
          </div>
        </div>
        <div className="relative w-[90px]">
          <ol className="flex h-full flex-col justify-between pt-[50px] text-[17px] leading-[18px]">
            {priceLabels.map((p) => (
              <li key={p} className="flex items-center gap-1.5">
                <span className="h-0.5 w-1 bg-[#d3d3d3]" />
                {p}
              </li>
            ))}
          </ol>
          <div className="absolute top-[574px] left-0 w-[82px] text-[17px] leading-[22px] text-black">
            <p className="-mb-3 bg-[#e03323] pl-2.5">1.44151</p>
            <p className="relative bg-[#dcdcdc] pl-2.5">1.44139</p>
          </div>
        </div>
      </div>

      <div className="flex h-[60px]">
        <div className="relative flex-1 overflow-hidden border-2 border-[#d3d3d3]">
          <svg viewBox="10 1912 3254 56" preserveAspectRatio="none" className="absolute inset-0 h-full w-full">
            {separators.map((x) => (
              <line key={x} x1={x} x2={x} y1="1912" y2="1968" stroke="#dcdcdc" strokeWidth="2" strokeDasharray="6 6" />
            ))}
            <path d="M10 1957v11h10z" fill="#7b8794" />
          </svg>
          <p className="relative h-10 pt-1.5 pl-1.5 text-[19px] leading-6">MT Window</p>
          <div className="relative ml-10 flex gap-0.5">
            {symbols.map((s, i) => (
              <button
                key={s}
                className={clsx(
                  "h-8 w-[110px] border-2 text-[14px] leading-none font-bold",
                  i === 1 && "border-[#a8a8a8] bg-[#0a14f5] text-[#f08c3c]",
                  i === 2 && "border-[#e838e8] bg-[#dcdcdc] text-[#333]",
                  i !== 1 && i !== 2 && "border-[#a8a8a8] bg-[#dcdcdc] text-[#333]"
                )}
              >
                {s}
              </button>
            ))}
          </div>
        </div>
        <div className="flex w-[90px] flex-col gap-3 pt-1.5 pl-2 text-[17px] leading-[18px]">
          <span>100</span>
          <span>20</span>
        </div>
      </div>

      <ol className="-mt-0.5 flex h-10 text-[17px] leading-6">
        {timeLabels.map((t) => (
          <li key={t} className="w-32 shrink-0 whitespace-nowrap">
            <span className="ml-0.5 block h-1.5 w-0.5 bg-[#d3d3d3]" />
            {t}
          </li>
        ))}
      </ol>
    </div>
  </section>
);

/* ---------- dialog ---------- */

const PushButton = ({ children, className }: { children: React.ReactNode; className?: string }) => (
  <button
    className={clsx(
      "border-2 border-t-white border-l-white border-r-[#404040] border-b-[#404040] bg-[#e4e4e4] pt-0.5 pr-1 text-[20px] shadow-[inset_-2px_-2px_#8a8a8a]",
      className
    )}
  >
    {children}
  </button>
);

const PeriodSelect = ({ id }: { id: string }) => {
  const [period, setPeriod] = useState("1 Day");
  return (
    <div className="relative h-10 border-2 border-t-[#808080] border-l-[#808080] border-r-[#e4e4e4] border-b-[#e4e4e4] bg-white">
      <select
        id={id}
        value={period}
        onChange={(e) => setPeriod(e.target.value)}
        className="h-full w-full appearance-none border-t-2 border-l-2 border-[#404040] bg-white pl-0.5 outline-none"
      >
        {periods.map((p) => (
          <option key={p}>{p}</option>
        ))}
      </select>
      <span className="pointer-events-none absolute top-0.5 right-0 flex h-[34px] w-[30px] items-center justify-center border-2 border-t-white border-l-white border-r-[#404040] border-b-[#404040] bg-[#e4e4e4]">
        <svg viewBox="0 0 14 8" className="h-2 w-3.5"><path d="M0 0h14L7 8z" /></svg>
      </span>
      <ul role="listbox" aria-label="Range period" className="absolute top-10 -left-0.5 z-10 w-[621px] border-2 border-black bg-white">
        {periods.map((p) => (
          <li
            key={p}
            role="option"
            aria-selected={p === period}
            onClick={() => setPeriod(p)}
            className={clsx("h-[26px] pl-px leading-7", p === period && "bg-[#122563] text-white")}
          >
            {p}
          </li>
        ))}
      </ul>
    </div>
  );
};

const ParamTable = () => (
  <div className="h-[1061px] w-[1246px] border-2 border-t-[#808080] border-l-[#808080] border-r-white border-b-white bg-white">
    <div className="h-full border-t-2 border-l-2 border-[#404040] pr-0.5">
      <table className="w-full table-fixed border-separate border-spacing-0 text-left">
        <thead>
          <tr>
            {["Variable", "Value"].map((h) => (
              <th
                key={h}
                className="h-[34px] border-r-2 border-b-2 border-[#808080] bg-[#e4e4e4] p-0 pl-2.5 text-[20px] leading-7 font-normal shadow-[inset_2px_0_#fff]"
              >
                {h}
              </th>
            ))}
          </tr>
        </thead>
        <tbody>
          {params.map((p, i) => (
            <tr key={p.name} className={i === 0 ? "bg-[#dce1f7]" : i % 2 ? "bg-[#ebebeb]" : "bg-white"}>
              <td className="h-10 border-r-2 border-b-2 border-[#c4c4c4] p-0 pl-0.5">
                <label htmlFor={`param${i}`} className="flex items-center gap-1.5 leading-8">
                  <ParamIcon kind={p.kind} />
                  <span className="pt-1">{p.name}</span>
                </label>
              </td>
              {i === 0 ? (
                <td className="h-10 p-0"><PeriodSelect id="param0" /></td>
              ) : (
                <td className="h-10 border-b-2 border-[#c4c4c4] p-0 pl-1">
                  <span id={`param${i}`} className="flex items-center gap-1.5 leading-8">
                    {p.swatch && <span className={clsx("ml-0.5 h-[26px] w-[26px] border-2 border-[#808080]", p.swatch)} />}
                    <span className="pt-1">{p.value}</span>
                  </span>
                </td>
              )}
            </tr>
          ))}
        </tbody>
      </table>
    </div>
  </div>
);

const IndicatorDialog = () => {
  const [tab, setTab] = useState("Inputs");
  return (
    <div
      role="dialog"
      aria-label="Custom Indicator"
      className="absolute top-[478px] left-[148px] w-[1548px] overflow-hidden rounded-[12px] bg-[#e4e4e4] text-[21px] text-black shadow-[0_24px_60px_16px_rgba(0,0,0,0.6)]"
    >
      <div className="relative flex h-11 items-center border-t-2 border-b-2 border-t-[#6a6a6a] border-b-black bg-linear-to-b from-[#424242] to-[#333] px-4">
        <div className="flex gap-4">
          <button aria-label="Close" className="h-6 w-6 rounded-full bg-[#ed6a5f]" />
          <button aria-label="Minimize" className="h-6 w-6 rounded-full bg-[#636363]" />
          <button aria-label="Maximize" className="h-6 w-6 rounded-full bg-[#71c048]" />
        </div>
        <h1 className="absolute inset-x-0 pt-0.5 text-center font-['Inter',sans-serif] text-[26px] text-[#b4b4b4]">
          Custom Indicator - Volume-Profile-Indicator
        </h1>
      </div>

      <div className="pt-3.5 pr-4 pb-4 pl-3">
        <div role="tablist" className="flex h-10 items-end pl-1 text-[20px]">
          {dialogTabs.map((t) => (
            <button
              key={t.name}
              role="tab"
              aria-selected={t.name === tab}
              onClick={() => setTab(t.name)}
              className={clsx(
                "shrink-0 rounded-t-[4px] border-t-2 border-r-4 border-l-2 border-t-white border-r-[#505050] border-l-white bg-[#e4e4e4]",
                t.width,
                t.name === tab ? "relative -mb-0.5 h-[42px] pb-1" : "h-9"
              )}
            >
              {t.name}
            </button>
          ))}
        </div>
        <div className="flex justify-between border-2 border-t-white border-l-white border-r-[#404040] border-b-[#404040] pt-[18px] pr-[22px] pb-[21px] pl-[22px] shadow-[inset_-2px_-2px_#808080]">
          <ParamTable />
          <div className="flex w-[212px] flex-col justify-end gap-4">
            <PushButton className="h-[50px]"><u>L</u>oad</PushButton>
            <PushButton className="h-[50px]"><u>S</u>ave</PushButton>
          </div>
        </div>
        <div className="mt-[22px] flex justify-end gap-3">
          <PushButton className="h-[46px] w-[150px] outline-2 -outline-offset-2 outline-black">OK</PushButton>
          <PushButton className="h-[46px] w-[150px]">Cancel</PushButton>
          <PushButton className="h-[46px] w-[150px]">Reset</PushButton>
        </div>
      </div>
    </div>
  );
};

/* ---------- bottom ---------- */

const ChartTabs = () => (
  <div className="flex h-[42px] items-start border-t-2 border-b-2 border-t-black border-b-white text-[22px]">
    <button className="h-9 w-[220px] border-l-2 border-[#808080] pl-1 text-[#555]">GBPJPY.pro,M30</button>
    <button className="-mt-0.5 h-[38px] w-[216px] border-x-2 border-b-2 border-black bg-white pr-1">EURCAD.pro,M30</button>
    <div className="ml-auto flex h-full items-center gap-8 pr-5">
      <button aria-label="Previous"><svg viewBox="0 0 6 12" className="h-3 w-1.5"><path d="M6 0v12L0 6z" fill="#999" /></svg></button>
      <button aria-label="Next"><svg viewBox="0 0 6 12" className="h-3 w-1.5"><path d="M0 0v12l6-6z" fill="#999" /></svg></button>
    </div>
  </div>
);

const StatusBar = () => (
  <footer className="flex h-11 items-end text-[21px]">
    <p className="h-9 flex-1 pl-0.5 leading-9">For Help, press F1</p>
    {statusCells.map((c) => (
      <span
        key={c.text}
        className={clsx("h-9 border-l-2 border-[#808080] pl-2 leading-9 shadow-[inset_2px_0_#fff]", c.width)}
      >
        {c.text}
      </span>
    ))}
    <span className="flex h-9 w-[278px] gap-2 border-l-2 border-[#808080] pl-2.5 leading-9 shadow-[inset_2px_0_#fff]">
      <svg viewBox="0 0 48 26" className="mt-1 h-[26px] w-12">
        {[0, 1, 2, 3, 4, 5, 6, 7].map((i) => (
          <g key={i}>
            <rect x={i * 6} y="0" width="4" height={i < 2 ? 18 - i * 2 : 16 - i * 2} fill="#6b7a1e" />
            <rect x={i * 6} y={20 - i * 2} width="4" height={6 + i * 2} fill="#1f4058" />
          </g>
        ))}
      </svg>
      14553/7 kb
      <svg viewBox="0 0 30 30" className="ml-auto h-[30px] w-[30px] self-end">
        <path d="M0 30L30 0M8 30L30 8M16 30l14-14M24 30l6-6" stroke="#909090" strokeWidth="3" />
      </svg>
    </span>
  </footer>
);

const App = () => (
  <div className="relative flex min-h-screen flex-col bg-[#e4e4e4] font-['DejaVu_Sans_Condensed','DejaVu_Sans',sans-serif] text-black">
    <MenuBar />
    <Toolbar />
    <Chart />
    <ChartTabs />
    <StatusBar />
    <IndicatorDialog />
  </div>
);

export default App;
